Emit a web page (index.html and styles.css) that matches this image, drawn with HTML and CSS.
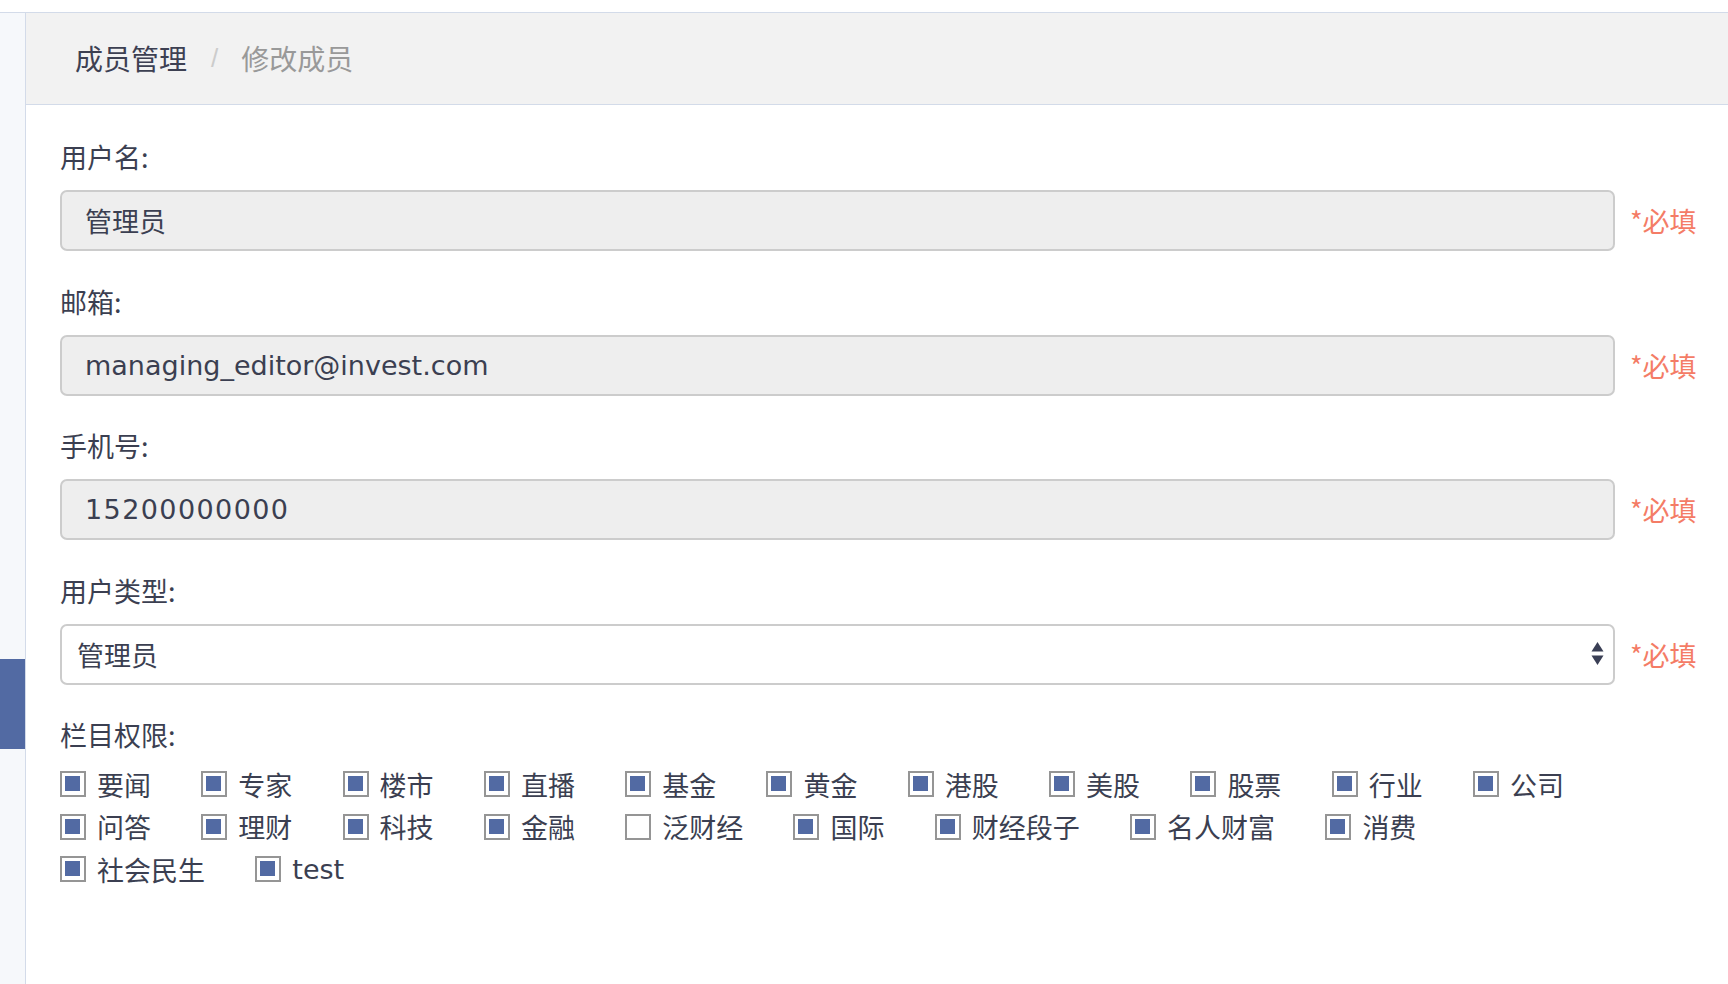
FILE: index.html
```html
<!DOCTYPE html>
<html lang="zh-CN">
<head>
<meta charset="utf-8">
<title>修改成员</title>
<link rel="stylesheet" href="styles.css">
</head>
<body>
<div class="app">
  <aside class="sidebar">
    <div class="nav-active"></div>
  </aside>
  <main class="main">
    <header class="crumbs">
      <span class="crumb">成员管理</span>
      <span class="sep">/</span>
      <span class="crumb current">修改成员</span>
    </header>
    <form class="form">
      <div class="group">
        <label class="label">用户名:</label>
        <div class="row">
          <input class="input" type="text" value="管理员" readonly>
          <span class="req">*必填</span>
        </div>
      </div>
      <div class="group">
        <label class="label">邮箱:</label>
        <div class="row">
          <input class="input" type="text" value="managing_editor@invest.com" readonly>
          <span class="req">*必填</span>
        </div>
      </div>
      <div class="group">
        <label class="label">手机号:</label>
        <div class="row">
          <input class="input input-num" type="text" value="15200000000" readonly>
          <span class="req">*必填</span>
        </div>
      </div>
      <div class="group">
        <label class="label">用户类型:</label>
        <div class="row">
          <div class="select-wrap">
            <select class="select">
              <option>管理员</option>
            </select>
            <svg class="select-arrows" width="13" height="24" viewBox="0 0 13 24"><path d="M6.5 0 L12.5 9.5 L0.5 9.5 Z" fill="#3a3f55"/><path d="M0.5 13.5 L12.5 13.5 L6.5 23 Z" fill="#3a3f55"/></svg>
          </div>
          <span class="req">*必填</span>
        </div>
      </div>
      <div class="group">
        <label class="label">栏目权限:</label>
        <div class="checks">
          <label class="check"><span class="box on"></span>要闻</label>
          <label class="check"><span class="box on"></span>专家</label>
          <label class="check"><span class="box on"></span>楼市</label>
          <label class="check"><span class="box on"></span>直播</label>
          <label class="check"><span class="box on"></span>基金</label>
          <label class="check"><span class="box on"></span>黄金</label>
          <label class="check"><span class="box on"></span>港股</label>
          <label class="check"><span class="box on"></span>美股</label>
          <label class="check"><span class="box on"></span>股票</label>
          <label class="check"><span class="box on"></span>行业</label>
          <label class="check"><span class="box on"></span>公司</label>
          <label class="check"><span class="box on"></span>问答</label>
          <label class="check"><span class="box on"></span>理财</label>
          <label class="check"><span class="box on"></span>科技</label>
          <label class="check"><span class="box on"></span>金融</label>
          <label class="check"><span class="box"></span>泛财经</label>
          <label class="check"><span class="box on"></span>国际</label>
          <label class="check"><span class="box on"></span>财经段子</label>
          <label class="check"><span class="box on"></span>名人财富</label>
          <label class="check"><span class="box on"></span>消费</label>
          <label class="check"><span class="box on"></span>社会民生</label>
          <label class="check"><span class="box on"></span>test</label>
        </div>
      </div>
    </form>
  </main>
</div>
</body>
</html>
```
FILE: styles.css
```css
html, body {
  margin: 0;
  padding: 0;
  background: #ffffff;
}
body {
  font-family: "DejaVu Sans", "Noto Sans CJK SC", sans-serif;
  color: #3b3f51;
}
.app {
  margin-top: 12px;
  border-top: 1px solid #d3dbe9;
  display: flex;
  min-height: 971px;
}
.sidebar {
  width: 26px;
  flex: none;
  background: #f6f8fb;
  border-right: 1px solid #d3dbe9;
  box-sizing: border-box;
  padding-top: 646px;
}
.nav-active {
  width: 25px;
  height: 90px;
  background: #526aa3;
}
.main {
  flex: 1;
  min-width: 0;
}
.crumbs {
  height: 92px;
  background: #f2f2f2;
  border-bottom: 1px solid #d3dbe9;
  display: flex;
  align-items: center;
  padding-left: 49px;
  font-size: 28px;
  line-height: 1;
  padding-bottom: 2px;
  box-sizing: border-box;
}
.crumb {
  color: #3d4052;
  font-family: "Noto Sans CJK SC", sans-serif;
}
.crumb.current {
  color: #999999;
}
.sep {
  color: #cccccc;
  margin: 0 23px 0 24px;
  font-family: "Liberation Sans", sans-serif;
  font-size: 26px;
}
.form {
  padding: 34px 0 0 34px;
}
.group {
  margin-bottom: 32.5px;
}
.label {
  display: block;
  font-family: "Noto Sans CJK SC", sans-serif;
  font-size: 27px;
  line-height: 36px;
  margin-bottom: 15px;
  color: #3b3f51;
}
.row {
  display: flex;
  align-items: center;
}
.input {
  width: 1555px;
  height: 61px;
  box-sizing: border-box;
  border: 2px solid #cccccc;
  border-radius: 7px;
  background: #eeeeee;
  padding: 0 0 0 23px;
  font-family: "DejaVu Sans", "Noto Sans CJK SC", sans-serif;
  font-size: 27px;
  color: #3b3f51;
  outline: none;
}
.input-num {
  letter-spacing: 1.4px;
}
.select-wrap {
  position: relative;
  width: 1555px;
  height: 61px;
}
.select {
  appearance: none;
  -webkit-appearance: none;
  width: 100%;
  height: 100%;
  box-sizing: border-box;
  border: 2px solid #cccccc;
  border-radius: 7px;
  background: #ffffff;
  padding: 0 0 0 15px;
  font-family: "Noto Sans CJK SC", sans-serif;
  font-size: 27px;
  color: #3b3f51;
  outline: none;
}
.select-arrows {
  position: absolute;
  right: 11px;
  top: 18px;
  pointer-events: none;
}
.req {
  margin-left: 15px;
  font-family: "Noto Sans CJK SC", sans-serif;
  font-size: 27px;
  color: #f47c66;
  white-space: nowrap;
}
.checks {
  display: flex;
  flex-wrap: wrap;
  column-gap: 50.3px;
  row-gap: 1px;
  max-width: 1530px;
  margin-top: -4.5px;
}
.check {
  display: inline-flex;
  align-items: center;
  gap: 11px;
  height: 41.5px;
  font-family: "DejaVu Sans", "Noto Sans CJK SC", sans-serif;
  font-size: 27px;
  color: #3b3f51;
}
.box {
  width: 26px;
  height: 26px;
  box-sizing: border-box;
  border: 2.5px solid #959595;
  padding: 3px;
  background: #ffffff;
  flex: none;
}
.box.on::before {
  content: "";
  display: block;
  width: 15px;
  height: 15px;
  background: #526aa3;
}
```
